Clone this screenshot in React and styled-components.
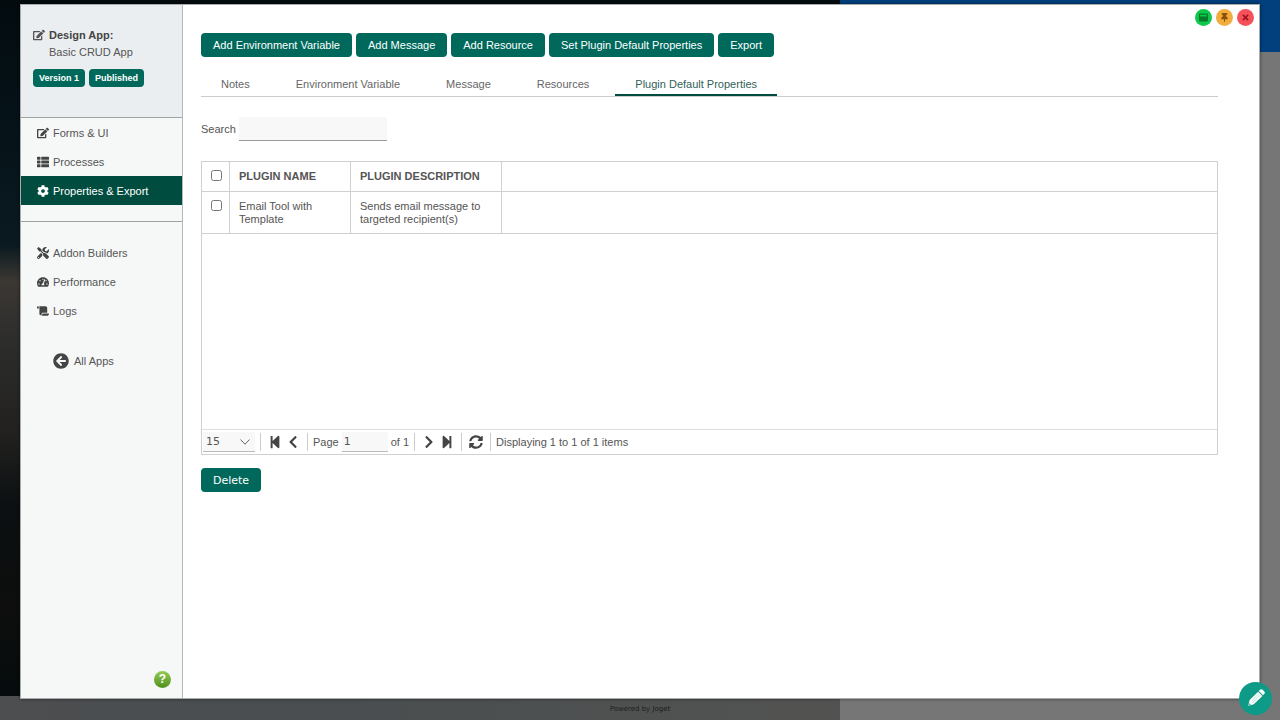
import React, { useState } from "react";
import styled, { createGlobalStyle, css } from "styled-components";
import {
  FaArrowCircleLeft,
  FaChevronLeft,
  FaChevronRight,
  FaCog,
  FaEdit,
  FaScroll,
  FaStepBackward,
  FaStepForward,
  FaSyncAlt,
  FaTachometerAlt,
  FaThList,
  FaThumbtack,
  FaTimes,
  FaTools,
  FaWindowMaximize,
} from "react-icons/fa";

const GlobalStyle = createGlobalStyle`
  * {
    box-sizing: border-box;
  }

  body {
    margin: 0;
    font-family: "Liberation Sans", Arial, sans-serif;
    font-size: 11px;
    line-height: 16px;
    color: #555;
  }

  button, input, select {
    font-family: inherit;
    font-size: inherit;
  }
`

const Page = styled.div`
  position: relative;
  min-height: 100vh;
  display: flex;
  flex-direction: column;
  overflow: hidden;
`

/* The dimmed site behind the dialog */
const Backdrop = styled.div`
  position: absolute;
  inset: 0;
  z-index: -1;
  display: grid;
  grid-template-columns: 21fr 11fr;
`

const Photo = styled.div`
  display: flex;
  flex-direction: column;
  background: linear-gradient(
    180deg,
    #030b0f 0%,
    #06141a 20%,
    #0a1a20 34%,
    #3b3733 39%,
    #2c2c2b 48%,
    #22211f 60%,
    #0c1012 70%,
    #0d0e0d 85%,
    #030a0d 100%
  );

  &::after {
    content: "";
    height: 24px;
    margin-top: auto;
    background: linear-gradient(90deg, #4c4e50, #4a4e50 40%, #525351);
  }
`

const Side = styled.div`
  background: #767676;

  &::before {
    content: "";
    display: block;
    height: 52px;
    background: #01407d;
  }
`

const Dialog = styled.div`
  position: relative;
  flex: 1;
  display: flex;
  margin: 4px 20px 0;
  border: 1px solid #a9acad;
  background: #fff;
  box-shadow: 0 0 3px rgba(0, 0, 0, 0.5);
`

const Sidebar = styled.aside`
  flex: 0 0 162px;
  display: flex;
  flex-direction: column;
  background: #f6f8f8;
  border-right: 1px solid #b5b8b8;
`

const AppInfo = styled.header`
  min-height: 113px;
  padding: 22px 12px 0;
  background: #ebeef0;
  border-bottom: 1px solid #a0a3a4;
`

const AppTitle = styled.div`
  display: flex;
  gap: 4px;
  line-height: 17px;

  svg {
    width: 12px;
    height: 12px;
    margin-top: 2px;
  }

  strong {
    display: block;
    color: #444;
  }
`

const Badges = styled.div`
  display: flex;
  gap: 4px;
  margin-top: 8px;
`

const Badge = styled.span`
  padding: 0 6px;
  border-radius: 4px;
  background: #00695c;
  color: #fff;
  font-size: 9px;
  font-weight: bold;
  line-height: 18px;
`

const Nav = styled.nav`
  padding-bottom: 16px;
`

const SecondaryNav = styled(Nav)`
  padding-top: 16px;
  border-top: 1px solid #a0a3a4;
`

const NavLink = styled.a`
  display: flex;
  align-items: center;
  gap: 4px;
  height: 29px;
  padding-left: 16px;
  color: #555;
  text-decoration: none;

  svg {
    width: 12px;
    height: 12px;
    color: #444;
  }

  ${(props) =>
    props.$active &&
    css`
      background: #004d40;
      color: #fff;

      svg {
        color: #fff;
      }
    `}
`

const BackLink = styled.a`
  display: flex;
  align-items: center;
  gap: 5px;
  padding: 12px 0 0 32px;
  color: #555;
  text-decoration: none;

  svg {
    width: 16px;
    height: 16px;
    color: #444;
  }
`

const HelpButton = styled.button`
  width: 17px;
  height: 17px;
  margin: auto 11px 10px auto;
  padding: 0;
  border: none;
  border-radius: 50%;
  background: linear-gradient(#96cc55, #4f8f1f);
  color: #fff;
  font-size: 12px;
  font-weight: bold;
  line-height: 17px;
`

const Main = styled.main`
  flex: 1;
  min-width: 0;
  padding: 28px 41px 0 18px;
`

const Buttons = styled.div`
  display: flex;
  gap: 4px;
`

const Button = styled.button`
  height: 24px;
  padding: 0 12px;
  border: none;
  border-radius: 4px;
  background: #00695c;
  color: #fff;
  white-space: nowrap;
`

const DeleteButton = styled(Button)`
  margin-top: 13px;
  font-family: "DejaVu Sans", Verdana, sans-serif;
`

const Tabs = styled.nav`
  display: flex;
  gap: 6px;
  margin-top: 19px;
  border-bottom: 1px solid #ccc;
`

const Tab = styled.a`
  padding: 0 20px 2px;
  border-bottom: 2px solid ${(props) => (props.$active ? "#004d40" : "transparent")};
  color: ${(props) => (props.$active ? "#2f5f58" : "#666")};
  text-decoration: none;
`

const Search = styled.div`
  display: flex;
  align-items: center;
  gap: 3px;
  margin-top: 20px;
`

const SearchInput = styled.input`
  width: 148px;
  height: 24px;
  border: none;
  border-bottom: 1px solid #999;
  background: #f8f8f8;
`

const Grid = styled.section`
  margin-top: 20px;
  border: 1px solid #d0d0d0;
`

const GridBody = styled.div`
  min-height: 267px;
`

const Table = styled.table`
  width: 100%;
  table-layout: fixed;
  border-collapse: separate;
  border-spacing: 0;
  line-height: 13px;

  th, td {
    padding: 8px 8px 8px 9px;
    border-right: 1px solid #d0d0d0;
    border-bottom: 1px solid #d0d0d0;
    text-align: left;
    vertical-align: top;
  }

  tbody td {
    padding-bottom: 7px;
  }

  th:last-child, td:last-child {
    border-right: none;
  }

  input {
    display: block;
    width: 11px;
    height: 11px;
    margin: 0;
  }
`

const Col = styled.col`
  width: ${(props) => props.$width};
`

const Pager = styled.footer`
  display: flex;
  align-items: center;
  height: 25px;
  padding-left: 1px;
  border-top: 1px solid #ddd;
`

const Separator = styled.span`
  width: 1px;
  height: 18px;
  margin: 0 5px;
  background: #ccc;
`

const SelectBox = styled.div`
  position: relative;
  width: 52px;

  svg {
    position: absolute;
    top: 6px;
    right: 4px;
    width: 12px;
    height: 8px;
    pointer-events: none;
  }
`

const PageSize = styled.select`
  display: block;
  width: 100%;
  height: 20px;
  padding: 0 3px;
  appearance: none;
  border: none;
  border-bottom: 1px solid #bbb;
  border-radius: 0;
  background: #f8f8f8;
  color: #555;
  font-family: "DejaVu Sans", Verdana, sans-serif;
`

const PageLabel = styled.label`
  display: flex;
  align-items: center;
  gap: 3px;
`

const PageInput = styled.input`
  width: 46px;
  height: 20px;
  padding: 0 2px;
  border: none;
  border-bottom: 1px solid #bbb;
  background: #f8f8f8;
  color: #555;
  font-family: "DejaVu Sans", Verdana, sans-serif;
`

const PagerButton = styled.button`
  display: flex;
  align-items: center;
  justify-content: center;
  width: 18px;
  height: 20px;
  padding: 0;
  border: none;
  background: none;
  color: #444;

  svg {
    width: 14px;
    height: 14px;
  }
`

const WindowButtons = styled.div`
  position: absolute;
  top: 4px;
  right: 5px;
  display: flex;
  gap: 4px;
`

const WindowButton = styled.button`
  display: flex;
  align-items: center;
  justify-content: center;
  width: 17px;
  height: 17px;
  padding: 0;
  border: none;
  border-radius: 50%;
  background: ${(props) => props.$background};
  color: ${(props) => props.$color};

  svg {
    width: 9px;
    height: 9px;
  }
`

const EditButton = styled.button`
  position: absolute;
  right: 8px;
  bottom: 5px;
  display: flex;
  align-items: center;
  justify-content: center;
  width: 33px;
  height: 33px;
  padding: 0 0 2px;
  border: none;
  border-radius: 50%;
  background: #0d9a86;
`

const PoweredBy = styled.footer`
  height: 21px;
  font-family: "DejaVu Sans", Verdana, sans-serif;
  font-size: 7px;
  line-height: 21px;
  text-align: center;
  color: #1c1c1c;
`

const mainLinks = [
  { label: "Forms & UI", icon: FaEdit },
  { label: "Processes", icon: FaThList },
  { label: "Properties & Export", icon: FaCog, active: true },
]

const otherLinks = [
  { label: "Addon Builders", icon: FaTools },
  { label: "Performance", icon: FaTachometerAlt },
  { label: "Logs", icon: FaScroll },
]

const actions = [
  "Add Environment Variable",
  "Add Message",
  "Add Resource",
  "Set Plugin Default Properties",
  "Export",
]

const tabs = ["Notes", "Environment Variable", "Message", "Resources", "Plugin Default Properties"]

const plugins = [
  { name: "Email Tool with Template", description: "Sends email message to targeted recipient(s)" },
]

function NavItems({ links }) {
  return links.map(({ label, icon: Icon, active }) => (
    <NavLink key={label} href="#" $active={active}>
      <Icon />
      {label}
    </NavLink>
  ));
}

function PencilIcon() {
  return (
    <svg width="18" height="18" viewBox="0 0 18 18">
      <g transform="rotate(45 9 9)">
        <path fill="#fff" d="M6 0.5a2 2 0 0 1 2-2h2a2 2 0 0 1 2 2v1.5H6z" />
        <path fill="#fff" d="M6 3h6v12l-3 5-3-5z" />
        <path stroke="#9fd6cd" strokeWidth="0.7" d="M8 4v11M10 4v11" />
        <path fill="#0d9a86" d="M8 17.4h2L9 19z" />
      </g>
    </svg>
  );
}

function PluginTable() {
  return (
    <Table>
      <colgroup>
        <Col $width="28px" />
        <Col $width="121px" />
        <Col $width="151px" />
        <Col $width="auto" />
      </colgroup>
      <thead>
        <tr>
          <th><input type="checkbox" aria-label="Select all" /></th>
          <th>PLUGIN NAME</th>
          <th>PLUGIN DESCRIPTION</th>
          <td />
        </tr>
      </thead>
      <tbody>
        {plugins.map((plugin) => (
          <tr key={plugin.name}>
            <td><input type="checkbox" aria-label={plugin.name} /></td>
            <td>{plugin.name}</td>
            <td>{plugin.description}</td>
            <td />
          </tr>
        ))}
      </tbody>
    </Table>
  );
}

function GridPager() {
  const [page, setPage] = useState("1");

  return (
    <Pager>
      <SelectBox>
        <PageSize aria-label="Items per page" defaultValue="15">
          <option>15</option>
          <option>30</option>
          <option>50</option>
        </PageSize>
        <svg viewBox="0 0 12 8" fill="none" stroke="#666">
          <path d="M1.5 1.5 6 6.2 10.5 1.5" />
        </svg>
      </SelectBox>
      <Separator />
      <PagerButton aria-label="First page"><FaStepBackward /></PagerButton>
      <PagerButton aria-label="Previous page"><FaChevronLeft /></PagerButton>
      <Separator />
      <PageLabel>
        Page
        <PageInput value={page} onChange={(e) => setPage(e.target.value)} />
        of 1
      </PageLabel>
      <Separator />
      <PagerButton aria-label="Next page"><FaChevronRight /></PagerButton>
      <PagerButton aria-label="Last page"><FaStepForward /></PagerButton>
      <Separator />
      <PagerButton aria-label="Refresh"><FaSyncAlt /></PagerButton>
      <Separator />
      <span>Displaying 1 to 1 of 1 items</span>
    </Pager>
  );
}

function App() {
  return (
    <Page>
      <GlobalStyle />
      <Backdrop>
        <Photo />
        <Side />
      </Backdrop>

      <Dialog>
        <Sidebar>
          <AppInfo>
            <AppTitle>
              <FaEdit />
              <div>
                <strong>Design App:</strong>
                Basic CRUD App
              </div>
            </AppTitle>
            <Badges>
              <Badge>Version 1</Badge>
              <Badge>Published</Badge>
            </Badges>
          </AppInfo>
          <Nav>
            <NavItems links={mainLinks} />
          </Nav>
          <SecondaryNav>
            <NavItems links={otherLinks} />
          </SecondaryNav>
          <BackLink href="#">
            <FaArrowCircleLeft />
            All Apps
          </BackLink>
          <HelpButton>?</HelpButton>
        </Sidebar>

        <Main>
          <Buttons>
            {actions.map((action) => (
              <Button key={action}>{action}</Button>
            ))}
          </Buttons>
          <Tabs>
            {tabs.map((tab) => (
              <Tab key={tab} href="#" $active={tab === "Plugin Default Properties"}>{tab}</Tab>
            ))}
          </Tabs>
          <Search>
            <label htmlFor="search">Search</label>
            <SearchInput id="search" type="text" />
          </Search>
          <Grid>
            <GridBody>
              <PluginTable />
            </GridBody>
            <GridPager />
          </Grid>
          <DeleteButton>Delete</DeleteButton>
        </Main>

        <WindowButtons>
          <WindowButton aria-label="Maximize" $background="#0cc94c" $color="#067a2c"><FaWindowMaximize /></WindowButton>
          <WindowButton aria-label="Pin" $background="#f0ac3c" $color="#8a5208"><FaThumbtack /></WindowButton>
          <WindowButton aria-label="Close" $background="#f4525a" $color="#a01420"><FaTimes /></WindowButton>
        </WindowButtons>
      </Dialog>

      <PoweredBy>Powered by Joget</PoweredBy>
      <EditButton aria-label="Edit page"><PencilIcon /></EditButton>
    </Page>
  );
}

export default App;
